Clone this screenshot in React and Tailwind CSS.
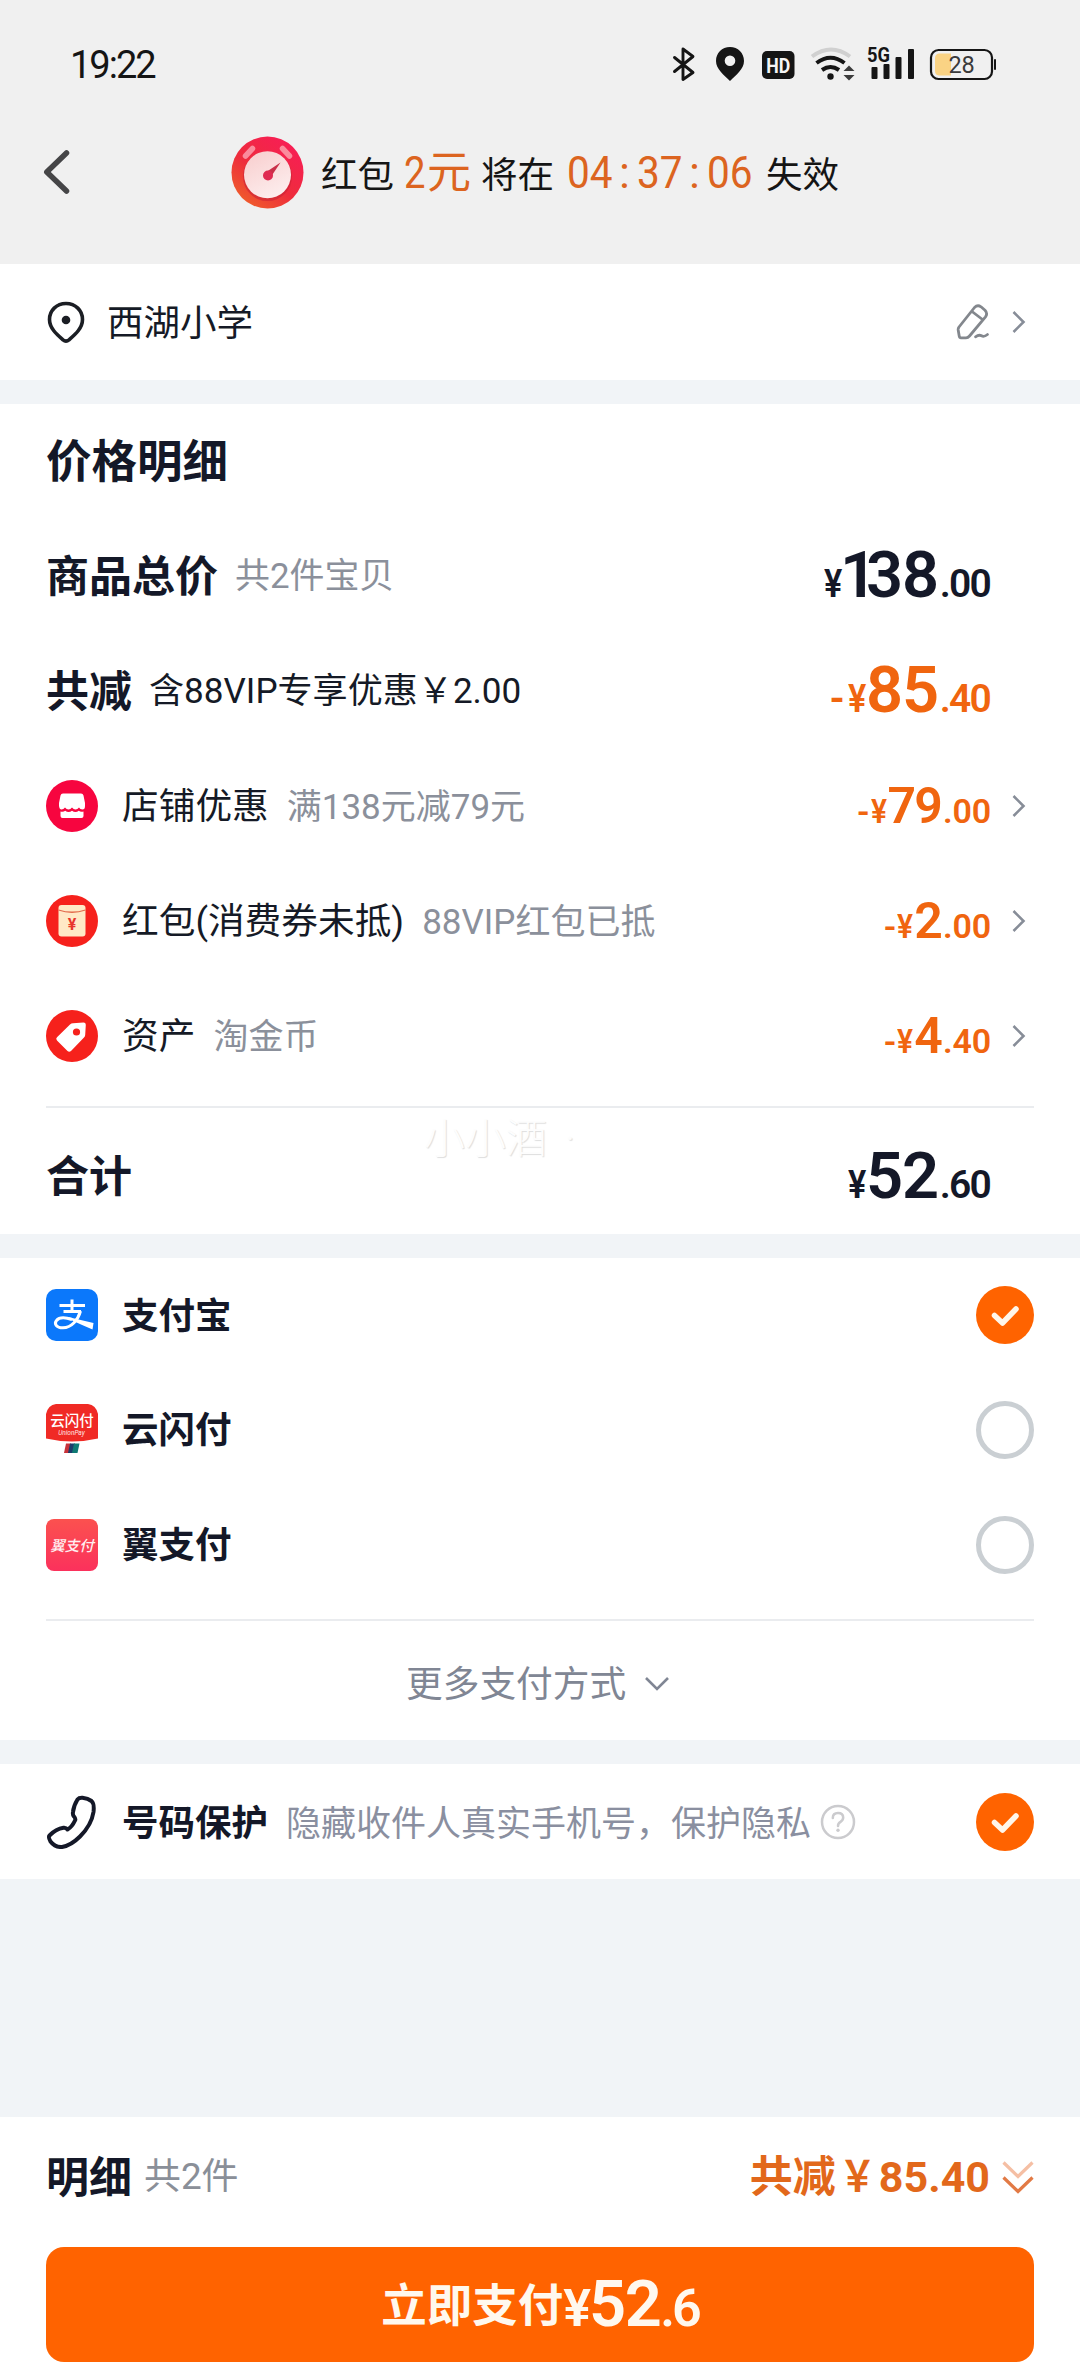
import React from "react";

const Chevron = () => (
  <svg className="h-[24px] w-[14px] shrink-0" viewBox="0 0 14 24" fill="none" stroke="#878d98" strokeWidth="2.6">
    <path d="M1.5 2 L11.5 12 L1.5 22" />
  </svg>
);

const Price = ({ minus, int, dec, tone = "dark", small }) => (
  <div
    className={`whitespace-nowrap font-semibold leading-none ${tone === "dark" ? "text-[#141828]" : "text-[#f0650f]"} ${
      small ? "text-[50px] tracking-[-1.800px]" : "text-[65px] tracking-[-1.300px]"
    }`}
  >
    {minus && <span className={small ? "mr-[3px] text-[34px]" : "mr-[5px] text-[40px]"}>-</span>}
    <span
      className={`inline-block origin-left ${small ? "w-[17px] scale-x-[0.880] text-[34px]" : "w-[18px] scale-x-[0.880] text-[39px]"}`}
    >
      ¥
    </span>
    {int.startsWith("1") ? (
      <>
        <span className="-ml-[2px] tracking-[-11px]">1</span>
        {int.slice(1)}
      </>
    ) : (
      int
    )}
    <span className={small ? "ml-[2px] text-[34px] tracking-[-0.200px]" : "ml-[2px] text-[39px] tracking-[-1.800px]"}>.{dec}</span>
  </div>
);

const Checked = () => (
  <svg className="size-[58px] shrink-0" viewBox="0 0 58 58">
    <circle cx="29" cy="29" r="29" fill="#ff6300" />
    <path d="M18.5 29.5 L26.5 37 L40 23" fill="none" stroke="#fff6ea" strokeWidth="5.500" strokeLinecap="round" strokeLinejoin="round" />
  </svg>
);

const Unchecked = () => <div className="size-[58px] shrink-0 rounded-full border-[5.500px] border-[#cacfd3]" />;

const StoreIcon = () => (
  <svg className="size-[52px]" viewBox="0 0 52 52">
    <circle cx="26" cy="26" r="26" fill="#f7053f" />
    <path d="M17 13.5h18q2 0 2.500 2l1.500 7.500v3q0 3.500-2.500 3.500t-3.500-2q-1.500 2-3.500 2t-3.500-2q-1.500 2-3.500 2t-3.500-2q-1.500 2-3.500 2t-2.500-3.500v-3l1.500-7.500q.500-2 2.500-2z" fill="#fff" />
    <path d="M14.500 31.500q3 .8 4.700-.8 1.600 1.300 3.400 1.300t3.400-1.300q1.600 1.300 3.400 1.300t3.400-1.300q1.700 1.600 4.700.8v4.500q0 2-2 2h-19q-2 0-2-2z" fill="#fff" />
  </svg>
);

const EnvelopeIcon = () => (
  <svg className="size-[52px]" viewBox="0 0 52 52">
    <circle cx="26" cy="26" r="26" fill="#f6211c" />
    <rect x="12.500" y="10" width="27" height="31.500" rx="3" fill="#ffe9c6" />
    <path d="M12.500 15q13.500 4.500 27 0" fill="none" stroke="#e2694a" strokeWidth="1.300" />
    <text x="26" y="34.500" textAnchor="middle" fontSize="16" fontWeight="700" fill="#e8352c">¥</text>
  </svg>
);

const TagIcon = () => (
  <svg className="size-[52px]" viewBox="0 0 52 52">
    <circle cx="26" cy="26" r="26" fill="#f6211c" />
    <path d="M27 13.200 L37.500 12.500 Q39.800 12.500 39.800 14.800 L39.200 25 Q39 26.500 38 27.500 L25 41 Q23.200 42.600 21.500 41 L11 30.500 Q9.400 28.800 11 27.200 L24 14.500 Q25.300 13.300 27 13.200z" fill="#fff" />
    <circle cx="30.500" cy="22" r="3.600" fill="#f6211c" />
  </svg>
);

const AlipayIcon = () => (
  <svg className="size-[52px]" viewBox="0 0 52 52">
    <rect width="52" height="52" rx="10" fill="#0b78fb" />
    <g fill="none" stroke="#fff" strokeWidth="3">
      <path d="M13.500 16.500H39M26 10.500V22M17.500 22.500H35" />
      <path d="M34.500 22 C32 31 25.500 38.800 17 38.800 C10 38.800 8 34.500 10.500 31.500 C13 28.300 19.500 28.300 26 30.500" />
    </g>
    <path d="M22 28 L47.500 34 L46.500 40.500 Q36 36 25 31z" fill="#fff" />
  </svg>
);

const UnionPayIcon = () => (
  <svg className="size-[52px]" viewBox="0 0 52 52">
    <path d="M10 0H42Q50 1 52 10V34.500Q39 37.500 26 37.500T0 34.500V10Q2 1 10 0z" fill="#f02a25" />
    <text x="26" y="21.500" textAnchor="middle" fontSize="14.500" fontWeight="500" fill="#fff">云闪付</text>
    <text x="25.500" y="31" textAnchor="middle" fontSize="6.500" fontStyle="italic" fill="#ffe3e0">UnionPay</text>
    <path d="M20 39.500h5l-2 9.500h-5z" fill="#c8323a" />
    <path d="M24 39.500h5l-2 9.500h-5z" fill="#1d3c6c" />
    <path d="M28 39.500h5.500l-2 9.500h-5.500z" fill="#0f7a74" />
  </svg>
);

const YiPayIcon = () => (
  <svg className="size-[52px]" viewBox="0 0 52 52">
    <defs>
      <linearGradient id="yi" x1="0" y1="0" x2="0" y2="1">
        <stop offset="0" stopColor="#fb514f" />
        <stop offset="1" stopColor="#fb315c" />
      </linearGradient>
    </defs>
    <rect width="52" height="52" rx="8" fill="url(#yi)" />
    <text x="26" y="31.500" textAnchor="middle" fontSize="14.500" fontStyle="italic" fontWeight="500" fill="#ffeef0">翼支付</text>
  </svg>
);

const StatusBar = () => (
  <div className="flex h-[130px] items-center pl-[70px] pr-[84px]">
    <div className="text-[38px] font-normal leading-none tracking-[-2px] text-[#151515]">19:22</div>
    <svg className="ml-auto h-[60px] w-[326px]" viewBox="670 35 326 60">
      <path d="M674.500 57.500 L693 72.500 L683 79.500 V49 L693 56.500 L674.500 71.500" fill="none" stroke="#151515" strokeWidth="2.900" strokeLinejoin="round" strokeLinecap="round" />
      <path fillRule="evenodd" d="M730 47c8 0 14 6 14 14 0 8-8 14-14 20-6-6-14-12-14-20 0-8 6-14 14-14zm0 8.500a5.300 5.300 0 1 0 0 10.600 5.300 5.300 0 0 0 0-10.600z" fill="#151515" />
      <rect x="762" y="51" width="32.500" height="28" rx="5" fill="#151515" />
      <text x="778.300" y="72.500" textAnchor="middle" fontSize="21" fontWeight="700" fill="#f5f5f5" textLength="24" lengthAdjust="spacingAndGlyphs">HD</text>
      <g fill="none">
        <path d="M812 56.500q19-14 38 0" stroke="#d0d0d0" strokeWidth="4" />
        <path d="M816.500 63q14-10.500 28 0" stroke="#151515" strokeWidth="4" />
        <path d="M822 70q8.500-6 17 0" stroke="#151515" strokeWidth="4" />
      </g>
      <circle cx="830.500" cy="76.500" r="3.200" fill="#151515" />
      <path d="M843.500 71l5.500-5.500 5.500 5.500zM843.500 75l5.500 5.500 5.500-5.500z" fill="#3c3c3c" />
      <text x="867" y="62" fontSize="20" fontWeight="700" fill="#151515" textLength="23" lengthAdjust="spacingAndGlyphs">5G</text>
      <g fill="#151515">
        <rect x="871.500" y="67" width="6" height="12" rx="1" />
        <rect x="883.500" y="64" width="6" height="15" rx="1" />
        <rect x="895.500" y="57" width="6" height="22" rx="1" />
        <rect x="908" y="49" width="6" height="30" rx="1" />
      </g>
      <rect x="931" y="50" width="61" height="29" rx="7.500" fill="none" stroke="#151515" strokeWidth="2.200" />
      <path d="M939 53.500H951V75.500H939Q935 75 935 71V58Q935 54 939 53.500z" fill="#fad384" />
      <rect x="994" y="59" width="2" height="11" rx="1" fill="#151515" />
      <text x="961.500" y="72.800" textAnchor="middle" fontSize="23.500" fill="#3a3a3a" letterSpacing="-0.300">28</text>
    </svg>
  </div>
);

const ClockIcon = () => (
  <svg className="size-[73px] shrink-0" viewBox="0 0 73 73">
    <defs>
      <linearGradient id="ring" x1="0.900" y1="0.200" x2="0.300" y2="1">
        <stop offset="0" stopColor="#f71f53" />
        <stop offset="0.550" stopColor="#ee2c3c" />
        <stop offset="1" stopColor="#ef5a2c" />
      </linearGradient>
      <linearGradient id="face" x1="0.200" y1="0" x2="0.700" y2="1">
        <stop offset="0" stopColor="#f8cfcf" />
        <stop offset="1" stopColor="#fdeeee" />
      </linearGradient>
    </defs>
    <circle cx="36.500" cy="36.500" r="36" fill="url(#ring)" />
    <circle cx="36.500" cy="40.500" r="24.500" fill="#c92236" opacity="0.600" />
    <circle cx="36.500" cy="38.800" r="23.500" fill="url(#face)" />
    <path d="M14.500 20L21.500 12.500M58.500 20L51.500 12.500" stroke="#fa8b9c" strokeWidth="5.500" strokeLinecap="round" />
    <path d="M34.500 36.500L49.500 26.500L39.500 41.500z" fill="#c93049" />
    <circle cx="37" cy="39.500" r="5" fill="#df2b51" />
  </svg>
);

const Detail = ({ icon, title, note, int, dec }) => (
  <div className="flex h-[115px] items-center pl-[46px] pr-[54px]">
    {icon}
    <div className="ml-[24px] pt-[3px] text-[36.700px] leading-none text-[#151a26]">{title}</div>
    <div className="ml-[18px] pt-[3px] text-[35px] leading-none text-[#8b909b]">{note}</div>
    <div className="ml-auto mr-[21px]">
      <Price minus small tone="orange" int={int} dec={dec} />
    </div>
    <Chevron />
  </div>
);

const Pay = ({ icon, title, on }) => (
  <div className="flex h-[114.800px] items-center px-[46px]">
    {icon}
    <div className="ml-[24px] mr-auto pt-[3px] text-[36.500px] font-bold leading-none text-[#141828]">{title}</div>
    {on ? <Checked /> : <Unchecked />}
  </div>
);

const Rule = () => <div className="mx-[46px] h-[2px] bg-[#eaecef]" />;

export default function App() {
  return (
    <div className="flex h-[2376px] w-[1080px] flex-col overflow-hidden whitespace-nowrap bg-[#f1f4f7] font-['Roboto','Noto_Sans_CJK_SC',sans-serif]">
      <header className="h-[264px] bg-[#f0f0f0]">
        <StatusBar />
        <div className="flex h-[84px] items-center pl-[42px]">
          <svg className="h-[48px] w-[30px]" viewBox="0 0 30 48" fill="none" stroke="#454547" strokeWidth="5.500" strokeLinecap="round" strokeLinejoin="round">
            <path d="M24.500 5 L4.800 24 L24.500 43" />
          </svg>
          <div className="ml-[159px]"><ClockIcon /></div>
          <div className="ml-[17px] flex items-baseline leading-none text-[#151515]">
            <span className="text-[36.500px]">红包</span>
            <span className="ml-[10px] inline-block w-[23px] origin-left scale-x-[0.850] text-[45px] text-[#dc6420]">2</span>
            <span className="text-[44px] text-[#dc6420]">元</span>
            <span className="ml-[10px] text-[36.500px]">将在</span>
            <span className="ml-[13px] flex w-[186px] justify-between text-[45px] text-[#dc6420]">
              <span className="inline-block w-[46px] origin-left scale-x-[0.900]">04</span>
              <span className="inline-block w-[12px]">:</span>
              <span className="inline-block w-[46px] origin-left scale-x-[0.900]">37</span>
              <span className="inline-block w-[12px]">:</span>
              <span className="inline-block w-[46px] origin-left scale-x-[0.900]">06</span>
            </span>
            <span className="ml-[13px] text-[36.500px]">失效</span>
          </div>
        </div>
      </header>

      <section className="flex h-[116px] items-center bg-white pl-[47px] pr-[54px]">
        <svg className="h-[42px] w-[38px]" viewBox="0 0 38 42">
          <path d="M19 2.500c9.500 0 16.500 7 16.500 16 0 9-8 15.500-13.500 20.300q-3 2.500-6 0C10.500 34 2.500 27.500 2.500 18.500c0-9 7-16 16.500-16z" fill="none" stroke="#1b1e24" strokeWidth="3.600" />
          <circle cx="19" cy="19" r="4.300" fill="#1b1e24" />
        </svg>
        <div className="ml-[22px] pt-[4px] text-[36.500px] leading-none text-[#151a26]">西湖小学</div>
        <svg className="ml-auto mr-[22px] h-[36px] w-[34px]" viewBox="0 0 34 36" fill="none" stroke="#83878d" strokeWidth="2.800" strokeLinejoin="round" strokeLinecap="round">
          <path d="M18.500 3.500Q21.500.500 25 2.800L29 6.300Q32 9.500 29.500 12.800L13.500 32Q12 33.800 10 33.800H5Q3.500 33.800 3.200 32L2.200 26Q2 24.500 3 23zM16 7.500L26.500 15.500" />
          <path d="M19.500 32.800q3.500-2.500 6-1t6-1.300" />
        </svg>
        <Chevron />
      </section>

      <section className="mt-[24px] h-[830px] bg-white">
        <h2 className="flex h-[114px] items-center pl-[46px] pt-[4px] text-[45.500px] font-bold leading-none text-[#141828]">价格明细</h2>
        <div className="flex h-[115px] items-center pl-[46px] pr-[90px]">
          <div className="pt-[3px] text-[43px] font-bold leading-none text-[#141828]">商品总价</div>
          <div className="ml-[17px] pt-[3px] text-[34.900px] leading-none text-[#8b909b]">共2件宝贝</div>
          <div className="ml-auto"><Price int="138" dec="00" /></div>
        </div>
        <div className="flex h-[115px] items-center pl-[46px] pr-[90px]">
          <div className="pt-[3px] text-[43px] font-bold leading-none text-[#141828]">共减</div>
          <div className="ml-[17px] pt-[2px] text-[35.100px] leading-none text-[#151a26]">含88VIP专享优惠￥2.00</div>
          <div className="ml-auto"><Price minus tone="orange" int="85" dec="40" /></div>
        </div>
        <Detail icon={<StoreIcon />} title="店铺优惠" note="满138元减79元" int="79" dec="00" />
        <Detail icon={<EnvelopeIcon />} title="红包(消费券未抵)" note="88VIP红包已抵" int="2" dec="00" />
        <Detail icon={<TagIcon />} title="资产" note="淘金币" int="4" dec="40" />
        <div className="h-[13px]" />
        <Rule />
        <div className="relative flex h-[126px] items-center pl-[46px] pr-[90px] pt-[10px]">
          <div className="pt-[3px] text-[43px] font-bold leading-none text-[#141828]">合计</div>
          <div className="absolute left-[424px] top-[11px] flex gap-[18px] text-[41px] font-light leading-none text-[#fdfdfd] [text-shadow:1px_1px_1px_#dedede]">
            <span>小小酒</span>
            <span>·</span>
          </div>
          <div className="ml-auto"><Price int="52" dec="60" /></div>
        </div>
      </section>

      <section className="mt-[24px] h-[482px] bg-white">
        <Pay icon={<AlipayIcon />} title="支付宝" on />
        <Pay icon={<UnionPayIcon />} title="云闪付" />
        <Pay icon={<YiPayIcon />} title="翼支付" />
        <div className="h-[16.600px]" />
        <Rule />
        <div className="flex h-[119px] items-center pl-[406px] pt-[8px]">
          <div className="pt-[2px] text-[36.700px] leading-none text-[#808694]">更多支付方式</div>
          <svg className="ml-[18px] h-[16px] w-[26px]" viewBox="0 0 26 16" fill="none" stroke="#808694" strokeWidth="2.600">
            <path d="M2 2 L13 13 L24 2" />
          </svg>
        </div>
      </section>

      <section className="mt-[24px] flex h-[115px] items-center bg-white px-[46px]">
        <svg className="h-[54px] w-[52px]" viewBox="0 0 52 54" fill="none" stroke="#141828" strokeWidth="4" strokeLinejoin="round" strokeLinecap="round">
          <path d="M31.500 4.500Q33 2.600 36.500 2.800Q42 3.500 45.500 6Q48.500 8.500 47.500 17Q45.500 30 34 41.500Q25 50.500 16 52Q9 52.500 4.500 46.500Q2 42 3.500 40.500Q10 34 17.500 32.800Q20 32.500 21.500 34.500Q26 32 29 25.500Q30 23.800 28 21.500Q26.500 20 27 17Q27.500 11 31.500 4.500z" />
        </svg>
        <div className="ml-[24px] pt-[5px] text-[36.500px] font-bold leading-none text-[#141828]">号码保护</div>
        <div className="ml-[18px] pt-[5px] text-[35px] leading-none text-[#8a8fa0]">隐藏收件人真实手机号，保护隐私</div>
        <svg className="ml-[9px] mr-auto size-[36px]" viewBox="0 0 36 36">
          <circle cx="18" cy="18" r="16" fill="none" stroke="#cbcbce" strokeWidth="2.500" />
          <path d="M12.800 14q0-5 5.200-5t5.200 4.600q0 2.700-2.700 4.300-2.500 1.500-2.500 4" fill="none" stroke="#cbcbce" strokeWidth="2.500" strokeLinecap="round" />
          <circle cx="18" cy="26.300" r="1.700" fill="#cbcbce" />
        </svg>
        <Checked />
      </section>

      <footer className="mt-[238px] flex-1 bg-white px-[46px]">
        <div className="flex h-[120px] items-center">
          <div className="pt-[2px] text-[43px] font-bold leading-none text-[#141828]">明细</div>
          <div className="ml-[12px] pt-[1px] text-[36.900px] leading-none text-[#8a8f98]">共2件</div>
          <div className="ml-auto text-[43px] font-bold leading-none text-[#e2681b]">
            共减<span className="inline-block scale-x-[0.850]">￥</span>85.40
          </div>
          <svg className="ml-[12px] h-[34px] w-[32px]" viewBox="0 0 32 34" fill="none" strokeWidth="3.200">
            <path d="M1.500 2.500L16 16.500L30.500 2.500" stroke="#f5bfa4" />
            <path d="M1.500 17.500L16 31.500L30.500 17.500" stroke="#e27a45" />
          </svg>
        </div>
        <button className="mt-[10px] flex h-[115px] w-full items-center justify-center rounded-[18px] bg-[#ff6300] text-[#fff8ee]">
          <span className="text-[45.500px] font-bold leading-none">
            <span className="relative -top-[4px]">立即支付</span>
            <span className="font-semibold">
              <span className="text-[52px] tracking-[-2px]">¥</span>
              <span className="text-[65px] tracking-[-1.500px]">52</span>
              <span className="text-[52px] tracking-[-3px]">.6</span>
            </span>
          </span>
        </button>
      </footer>
    </div>
  );
}
